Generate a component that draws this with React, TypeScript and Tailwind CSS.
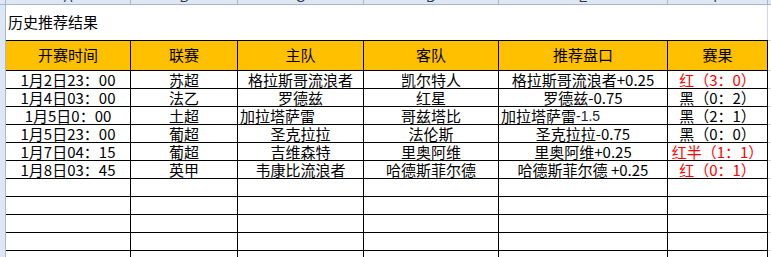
const font = { fontFamily: '"Noto Sans CJK SC", "Noto Sans", sans-serif' }

type Row = {
  time: string
  league: string
  home: string
  away: string
  pick: React.ReactNode
  result: string
  red?: boolean
  homeLeft?: boolean
  pickLeft?: boolean
}

const rows: Row[] = [
  { time: '1月2日23：00', league: '苏超', home: '格拉斯哥流浪者', away: '凯尔特人', pick: '格拉斯哥流浪者+0.25', result: '红（3：0）', red: true },
  { time: '1月4日03：00', league: '法乙', home: '罗德兹', away: '红星', pick: '罗德兹-0.75', result: '黑（0：2）' },
  {
    time: '1月5日0：00',
    league: '土超',
    home: '加拉塔萨雷',
    away: '哥兹塔比',
    pick: (
      <>
        加拉塔萨雷
        <span className="text-[14px] text-[#1a1f2e]" style={{ fontFamily: '"Liberation Sans", sans-serif' }}>
          -1.5
        </span>
      </>
    ),
    result: '黑（2：1）',
    homeLeft: true,
    pickLeft: true,
  },
  { time: '1月5日23：00', league: '葡超', home: '圣克拉拉', away: '法伦斯', pick: '圣克拉拉-0.75', result: '黑（0：0）' },
  { time: '1月7日04：15', league: '葡超', home: '吉维森特', away: '里奥阿维', pick: '里奥阿维+0.25', result: '红半（1：1）', red: true },
  { time: '1月8日03：45', league: '英甲', home: '韦康比流浪者', away: '哈德斯菲尔德', pick: '哈德斯菲尔德 +0.25', result: '红（0：1）', red: true },
]

const grid = 'grid grid-cols-[125px_107px_126px_135px_169px_100px_1fr]'

function Cell({ children, left, red }: { children?: React.ReactNode; left?: boolean; red?: boolean }) {
  return (
    <div
      className={`h-[18px] border-b border-r border-black flex items-end px-[2px] text-[15px] leading-[16px] whitespace-nowrap overflow-hidden ${
        left ? 'justify-start' : 'justify-center'
      } ${red ? 'text-[#ff0000]' : 'text-black'}`}
    >
      {children}
    </div>
  )
}

export default function App() {
  const letters = ['A', 'B', 'C', 'D', 'E', 'F']
  const headers = ['开赛时间', '联赛', '主队', '客队', '推荐盘口', '赛果']

  return (
    <div className="w-[771px] h-[257px] overflow-hidden bg-white flex flex-col" style={font}>
      {/* column letters strip */}
      <div className="flex h-[5px] shrink-0">
        <div className="w-[6px] bg-[#dfe7f2] border-r border-b border-[#a5b8d0]" />
        <div className={`${grid} flex-1`}>
          {letters.map((l) => (
            <div
              key={l}
              className="bg-[#dfe7f2] border-r border-b border-[#a5b8d0] overflow-hidden flex justify-center"
            >
              <span
                className="text-[13px] leading-[14px] mt-[-9px] text-[#2d3a4d]"
                style={{ fontFamily: '"Liberation Sans", sans-serif' }}
              >
                {l}
              </span>
            </div>
          ))}
          <div className="bg-[#dfe7f2] border-b border-[#a5b8d0]" />
        </div>
      </div>

      <div className="flex flex-1">
        {/* row header strip */}
        <div className="w-[6px] shrink-0 bg-[#dfe7f2] border-r border-[#a5b8d0]" />

        <div className="flex-1 flex flex-col">
          <div className="flex h-[35px] shrink-0">
            <div className="w-[762px] border-r border-[#d0d7e5] flex items-center pl-[2px] text-[15px] text-black">
              历史推荐结果
            </div>
          </div>

          <div className={grid}>
            {headers.map((h) => (
              <div
                key={h}
                className="h-[31px] bg-[#ffc000] border-t border-b border-r border-black flex items-center justify-center text-[15px] text-black"
              >
                {h}
              </div>
            ))}
            <div className="h-[31px] border-t border-b border-[#d0d7e5]" />

            {rows.map((r, i) => (
              <div key={i} className="contents">
                <Cell>{r.time}</Cell>
                <Cell>{r.league}</Cell>
                <Cell left={r.homeLeft}>{r.home}</Cell>
                <Cell>{r.away}</Cell>
                <Cell left={r.pickLeft}>{r.pick}</Cell>
                <Cell red={r.red}>{r.result}</Cell>
                <div className="h-[18px] border-b border-[#d0d7e5]" />
              </div>
            ))}

            {[0, 1, 2, 3, 4].map((i) => (
              <div key={`e${i}`} className="contents">
                <Cell />
                <Cell />
                <Cell />
                <Cell />
                <Cell />
                <Cell />
                <div className="h-[18px] border-b border-[#d0d7e5]" />
              </div>
            ))}
          </div>
        </div>
      </div>
    </div>
  )
}
